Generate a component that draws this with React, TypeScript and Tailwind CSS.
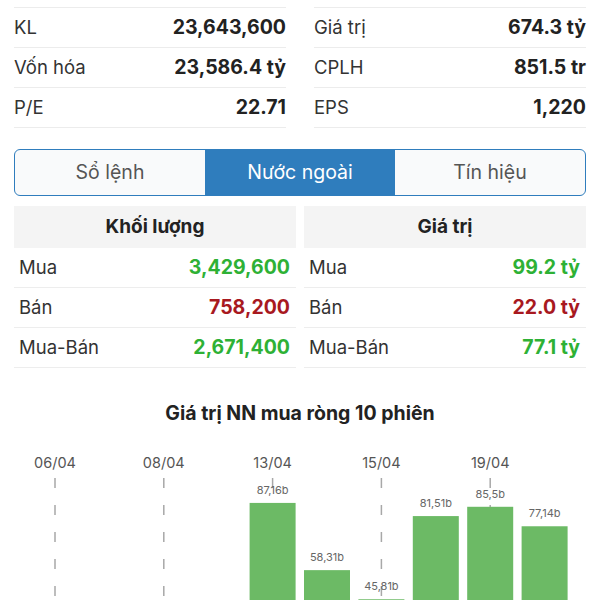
import React from "react";

// Thống kê cơ bản (top block)
const stats: [string, string][][] = [
  [
    ["KL", "23,643,600"],
    ["Vốn hóa", "23,586.4 tỷ"],
    ["P/E", "22.71"],
  ],
  [
    ["Giá trị", "674.3 tỷ"],
    ["CPLH", "851.5 tr"],
    ["EPS", "1,220"],
  ],
];

type Row = { label: string; value: string; up: boolean };

const tables: { title: string; rows: Row[] }[] = [
  {
    title: "Khối lượng",
    rows: [
      { label: "Mua", value: "3,429,600", up: true },
      { label: "Bán", value: "758,200", up: false },
      { label: "Mua-Bán", value: "2,671,400", up: true },
    ],
  },
  {
    title: "Giá trị",
    rows: [
      { label: "Mua", value: "99.2 tỷ", up: true },
      { label: "Bán", value: "22.0 tỷ", up: false },
      { label: "Mua-Bán", value: "77.1 tỷ", up: true },
    ],
  },
];

const sessions = [
  { date: "06/04", value: 12.4 },
  { date: "07/04", value: 8.2 },
  { date: "08/04", value: 20.5 },
  { date: "12/04", value: 30.1 },
  { date: "13/04", value: 87.16 },
  { date: "14/04", value: 58.31 },
  { date: "15/04", value: 45.81 },
  { date: "16/04", value: 81.51 },
  { date: "19/04", value: 85.5 },
  { date: "20/04", value: 77.14 },
];

const CHART_H = 163;

const ForeignChart = () => {
  const baseY = 266;
  const scale = 2.33;
  const step = 54.4;
  const barW = 46;
  const fmt = (v: number) => v.toString().replace(".", ",") + "b";
  return (
    <svg width={600} height={CHART_H} className="block">
      {sessions.map((s, i) =>
        i % 2 === 0 ? (
          <g key={"d" + i}>
            <text x={55 + step * i} y={28} textAnchor="middle" fontSize={14.5} fill="#555">
              {s.date}
            </text>
            <line
              x1={55 + step * i}
              x2={55 + step * i}
              y1={38}
              y2={CHART_H}
              stroke="#a8a8a8"
              strokeWidth={1.5}
              strokeDasharray="10 17"
            />
          </g>
        ) : null
      )}
      {sessions.map((s, i) => {
        const cx = 55 + step * i;
        const top = baseY - s.value * scale;
        if (top - 9 > CHART_H) return null;
        return (
          <g key={"b" + i}>
            <rect x={cx - barW / 2} y={top} width={barW} height={baseY - top} fill="#6cba65" />
            <text x={cx} y={top - 9} textAnchor="middle" fontSize={11} fill="#666">
              {fmt(s.value)}
            </text>
          </g>
        );
      })}
    </svg>
  );
};

export default function App() {
  return (
    <div className="w-[600px] h-[600px] overflow-hidden bg-white text-[#222] font-['Inter',sans-serif]">
      <div className="grid grid-cols-2 gap-x-7 px-[14px] pt-[7px]">
        {stats.map((col, ci) => (
          <div key={ci} className="border-t border-[#ececec]">
            {col.map(([label, value]) => (
              <div key={label} className="flex h-[40px] items-center justify-between border-b border-[#ececec]">
                <span className="text-[18.5px] text-[#333]">{label}</span>
                <span className="text-[19.5px] font-bold">{value}</span>
              </div>
            ))}
          </div>
        ))}
      </div>

      <div className="mx-[14px] mt-[21px] flex h-[47px] overflow-hidden rounded-md border-[1.5px] border-[#2f7dbd] bg-[#f9fafb] text-[19.5px]">
        <div className="flex flex-1 items-center justify-center text-[#555]">Sổ lệnh</div>
        <div className="flex flex-1 items-center justify-center bg-[#2f7dbd] text-white">Nước ngoài</div>
        <div className="flex flex-1 items-center justify-center text-[#555]">Tín hiệu</div>
      </div>

      <div className="mx-[14px] mt-[10px] grid grid-cols-2 gap-x-2">
        {tables.map((t) => (
          <div key={t.title}>
            <div className="flex h-[42px] items-center justify-center bg-[#f4f4f4] text-[19px] font-bold">
              {t.title}
            </div>
            {t.rows.map((r) => (
              <div key={r.label} className="flex h-[40px] items-center justify-between border-b border-[#ededed] pl-[5px] pr-[6px]">
                <span className="text-[18.5px] text-[#333]">{r.label}</span>
                <span className={r.up ? "text-[19.5px] font-bold text-[#2eb135]" : "text-[19.5px] font-bold text-[#a8191f]"}>
                  {r.value}
                </span>
              </div>
            ))}
          </div>
        ))}
      </div>

      <div className="mt-[31px] text-center text-[19.5px] font-bold">Giá trị NN mua ròng 10 phiên</div>
      <div className="mt-[12px]">
        <ForeignChart />
      </div>
    </div>
  );
}
